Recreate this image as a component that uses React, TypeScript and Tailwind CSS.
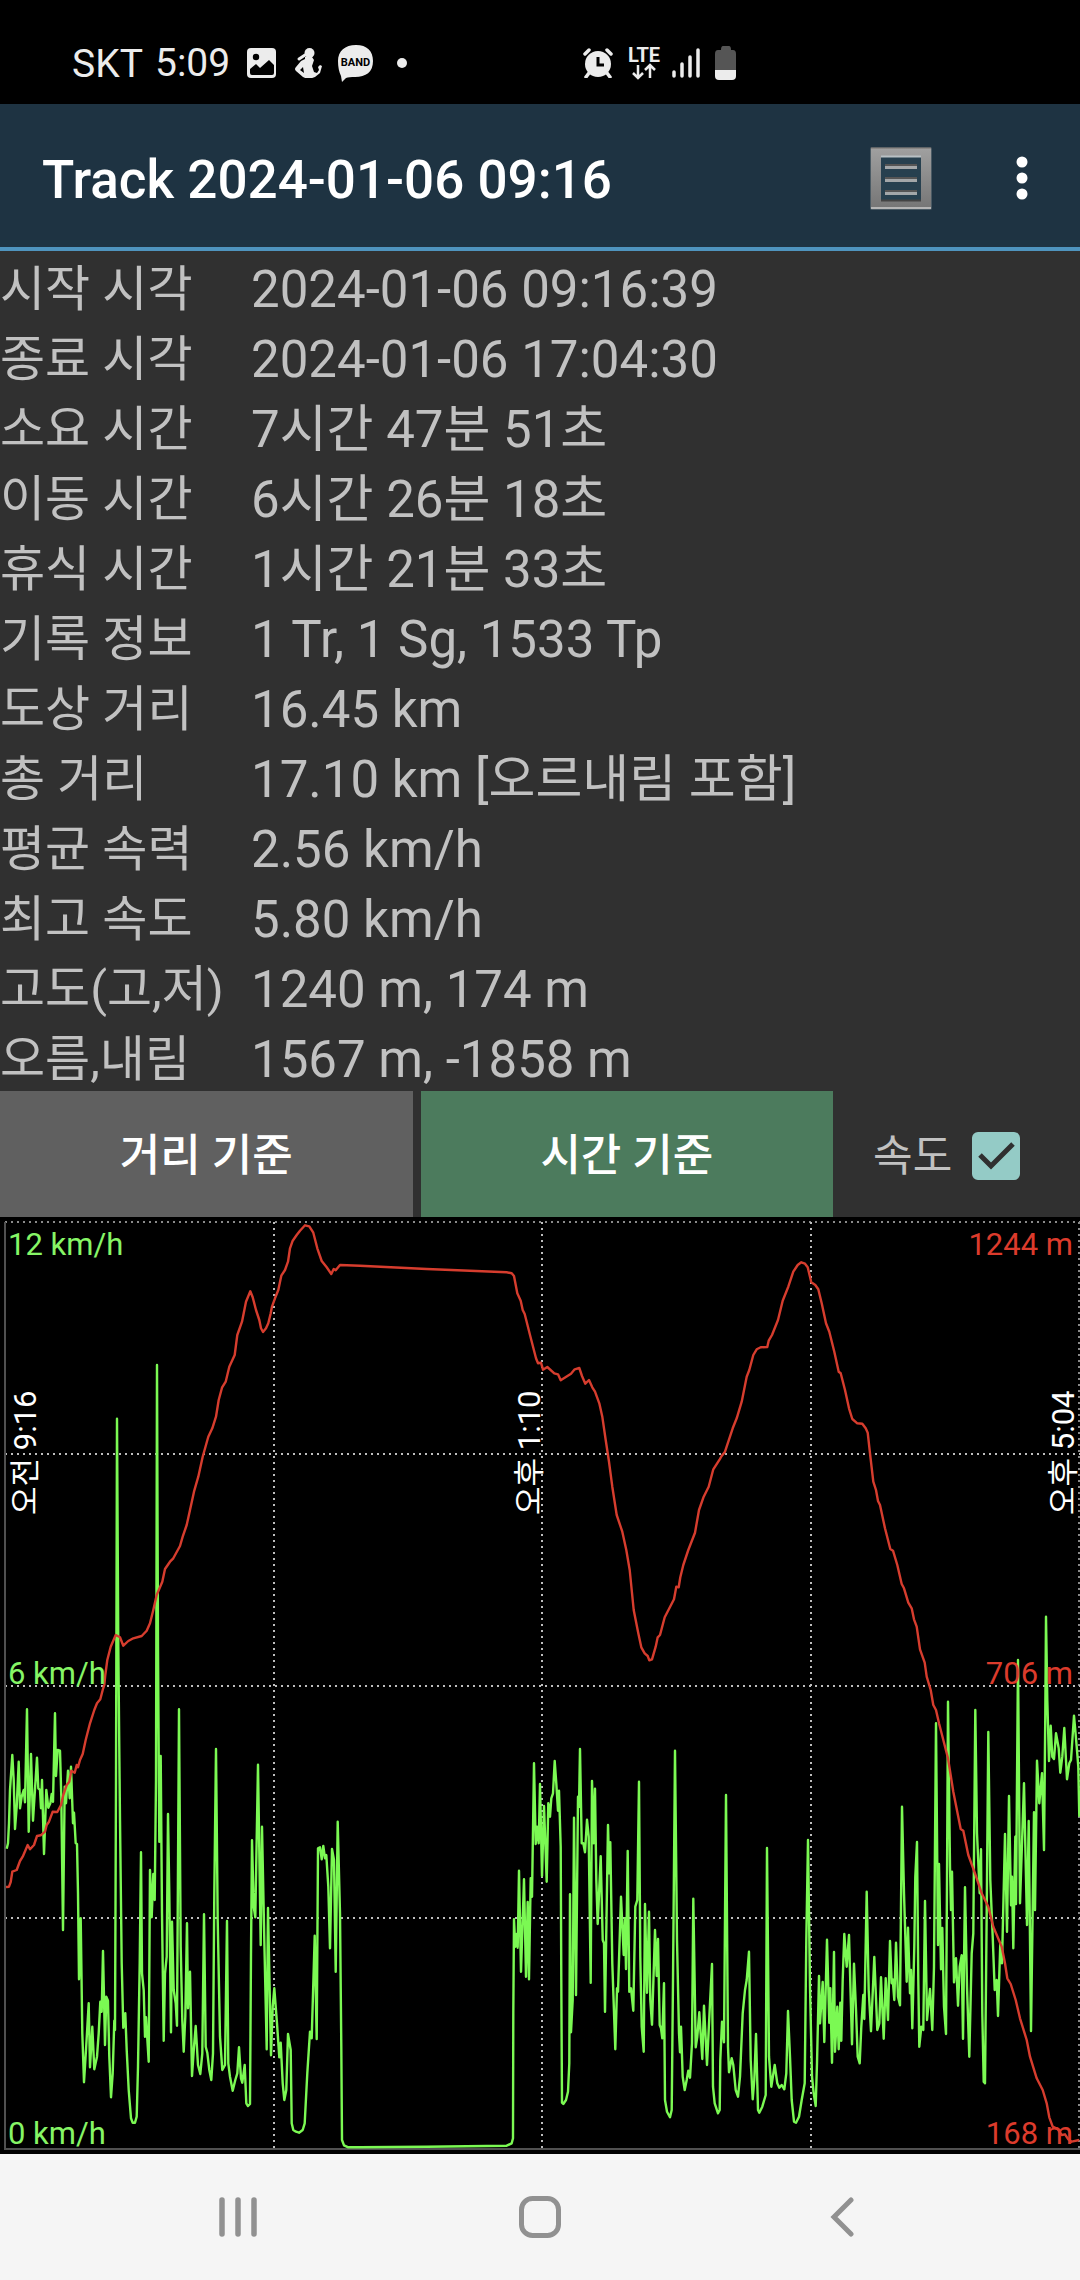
import React, { useState } from "react";

const stats = [
  { label: "시작 시각", value: "2024-01-06 09:16:39" },
  { label: "종료 시각", value: "2024-01-06 17:04:30" },
  { label: "소요 시간", value: "7시간 47분 51초" },
  { label: "이동 시간", value: "6시간 26분 18초" },
  { label: "휴식 시간", value: "1시간 21분 33초" },
  { label: "기록 정보", value: "1 Tr, 1 Sg, 1533 Tp" },
  { label: "도상 거리", value: "16.45 km" },
  { label: "총 거리", value: "17.10 km [오르내림 포함]" },
  { label: "평균 속력", value: "2.56 km/h" },
  { label: "최고 속도", value: "5.80 km/h" },
  { label: "고도(고,저)", value: "1240 m, 174 m" },
  { label: "오름,내림", value: "1567 m, -1858 m" },
];

// Samples are stored in thirds of a chart unit, one string per third of the time axis
const speedSamples = [
  "20,506 24,490 27,430 30,330 37,225 41,300 45,447 50,380 56,245 60,385 65,350 71,330 75,367 81,88 86,455 93,222 99,422 111,233 115,325 120,330 123,385 126,300 132,522 139,330 145,383 151,370 155,342 159,365 165,100 168,288 173,210 180,212 184,350 189,750 194,320 198,370 204,272 209,355 213,260 219,430 222,398 227,490 231,492 234,640 237,898 242,715 247,1060 252,1207 258,1110 266,970 270,1162 277,1040 283,1168 291,1130 296,1060 301,965 305,995 309,813 315,1095 319,950 324,962 328,1130 333,1252 338,1180 343,1022 345,1050 348,300 351,-784 355,-100 360,420 365,850 370,1043 376,1000 380,1110 386,1230 393,1315 398,1328 405,1328 410,1310 414,1160 419,850 423,517 426,880 431,930 435,1070 438,1012 446,1145 450,570 455,712 460,582 464,660 468,300 471,-945 474,-100 478,485 482,228 486,700 491,1082 495,880 500,830 504,402 508,640 513,1057 516,725 521,930 527,970 531,1037 537,88 542,800 547,1020 551,1115 556,1010 561,730 564,985 570,875 576,1188 582,1100 587,1038 594,1155 601,1182 607,1120 612,703 617,1100 622,1118 628,1170 634,1200 639,1120 643,640 648,207 653,720 660,1070 667,1170 675,1155 681,723 685,1150 690,1190 698,1232 706,1200 712,1180 717,1102 723,1195 727,1208 734,1155 739,1270 744,1278 750,1272 753,820 756,481 761,680 766,712 774,254 782,795 786,440 793,780 800,1108 804,684 813,1126 818,980 823,925 831,1030 838,1132 842,1088 848,1210 853,1260 859,1230 864,1062 872,1110 875,1330 880,1350 888,1355 897,1358 908,1350 914,1330 922,1180 930,1055 935,1075 944,767 950,1077 954,505 960,502 965,538 970,498 975,535 979,525 985,620 990,805 996,507 1002,540 1007,875 1013,425 1020,700 1024,1100 1026,1380 1032,1396 1045,1402",
  "0,1402 200,1400 440,1397 455,1390 459,1375 460,1000 462,718 466,800 470,762 473,803 477,572 483,875 492,598 498,890 503,666 507,898 512,595 516,650 522,250 527,492 531,440 536,490 540,312 546,588 552,378 560,605 565,370 570,410 574,355 579,340 584,243 589,310 594,392 597,332 602,500 604,900 606,1268 610,1272 618,1260 624,1235 628,1150 630,643 633,1057 638,960 642,413 648,945 654,350 657,380 660,207 665,490 670,490 675,517 681,419 686,470 692,908 696,303 701,490 705,326 709,600 713,732 722,529 728,780 732,790 735,995 744,435 748,580 751,487 757,850 766,1108 771,925 774,935 783,650 791,825 795,715 798,867 803,513 808,935 813,925 820,992 826,680 832,660 837,305 841,830 845,1040 851,1115 855,672 861,938 867,695 871,960 876,1034 885,750 890,888 894,777 899,1035 903,1045 907,1075 912,910 915,1260 921,1295 930,1312 935,1290 939,900 945,212 951,780 957,1060 960,1117 963,1040 968,1190 974,1230 980,1200 985,1172 990,1193 996,1090 1000,656 1007,1102 1012,1070 1018,997 1027,1137 1032,977 1041,1155 1050,970 1056,852 1059,1220 1064,1270 1074,1300 1079,1290",
  "1,1140 6,1025 12,1087 18,345 24,1100 27,1177 35,1135 40,1155 47,1230 54,1250 60,1190 68,1000 75,930 80,900 87,815 92,1140 98,1258 103,1200 108,1062 114,1290 118,1298 127,1280 137,1245 141,504 147,1130 154,1220 164,1155 172,1210 178,1223 185,1215 193,1228 199,1180 204,993 210,1130 215,1260 222,1325 228,1328 237,1310 245,1260 254,1210 259,780 264,480 270,920 276,1190 281,1240 287,1278 291,1150 297,888 300,1030 308,906 313,1086 321,779 328,1028 331,925 336,1148 342,816 345,1115 352,980 356,1108 361,968 364,1082 368,900 373,762 380,860 387,765 396,1093 402,851 408,990 413,1130 419,1150 424,1040 430,945 433,1017 440,635 446,930 453,1054 463,831 472,1050 478,1030 483,892 491,1076 497,895 504,1020 510,783 515,910 518,898 523,960 528,788 534,950 540,976 546,380 552,640 560,905 564,743 570,940 573,870 577,1045 583,800 586,590 591,486 595,900 598,1100 604,1040 610,1050 615,663 621,1020 630,927 637,1050 642,860 648,130 654,795 657,552 663,868 667,744 672,980 678,1062 681,600 684,65 690,560 693,690 696,575 702,907 708,835 714,977 719,860 725,826 729,1076 735,622 741,920 748,1130 755,820 760,760 766,90 771,460 779,640 783,508 787,1000 791,1205 795,1210 800,700 805,156 811,600 818,770 824,930 830,900 834,1008 841,790 846,850 855,462 861,755 867,348 873,676 876,590 880,805 886,470 888,672 894,-60 900,670 912,310 921,735 926,423 933,1053 942,397 945,690 951,242 958,370 966,280 972,510 976,100 978,-190 982,60 987,243 992,137 997,230 1002,237 1008,160 1016,205 1021,278 1027,230 1033,144 1041,298 1048,250 1053,240 1062,107 1070,200 1075,260 1078,410",
];

const altitudeSamples = [
  "18,2031 27,2030 32,2016 37,1985 50,1980 60,1953 68,1940 83,1905 90,1918 102,1905 111,1878 122,1876 135,1865 140,1845 147,1835 158,1805 172,1806 183,1785 190,1755 200,1725 208,1715 214,1682 224,1688 230,1665 234,1672 240,1650 248,1632 257,1590 270,1540 283,1500 291,1480 301,1468 308,1440 313,1425 316,1395 322,1350 332,1310 347,1275 360,1282 370,1307 385,1293 400,1285 425,1278 440,1262 450,1240 460,1200 470,1155 487,1115 495,1077 510,1055 520,1045 540,1008 548,980 560,945 570,900 582,845 595,800 608,740 625,680 637,655 648,620 656,570 666,533 677,515 688,470 704,435 712,375 726,335 738,275 751,244 758,262 768,300 778,330 783,355 789,366 798,355 805,340 812,310 816,290 825,265 835,240 844,197 855,180 864,155 870,115 878,92 890,75 900,62 915,46 928,49 940,68 952,115 965,153 980,172 994,192 1001,177 1007,181 1020,165",
  "0,167 200,177 440,187 455,190 462,198 472,250 482,272 488,300 494,312 510,375 528,445 534,460 543,458 549,479 562,471 583,490 594,493 602,511 633,491 644,478 658,474 666,498 676,521 687,510 697,532 705,545 718,580 727,620 737,690 747,755 757,830 770,915 787,965 799,1020 809,1080 821,1200 835,1270 844,1312 854,1330 863,1338 868,1351 876,1348 887,1310 893,1282 900,1275 914,1222 942,1168 949,1130 956,1132 961,1102 970,1065 985,1020 1005,968 1017,900 1031,860 1046,830 1060,778 1079,748",
  "5,738 15,725 38,655 50,625 65,575 80,500 88,480 100,435 110,418 122,412 142,411 146,392 156,375 174,330 188,272 205,230 220,185 233,165 244,157 255,161 263,172 274,217 286,225 295,238 305,280 318,340 328,365 343,425 356,485 362,490 375,540 387,595 397,627 412,640 427,641 437,655 443,668 450,730 460,815 468,840 474,873 480,885 495,955 511,1017 519,1022 532,1065 545,1122 552,1135 565,1178 575,1195 582,1228 590,1250 600,1318 614,1358 620,1400 632,1440 640,1485 648,1500 657,1540 684,1645 700,1745 722,1857 730,1862 745,1935 765,1990 785,2050 805,2090 820,2150 845,2210 855,2260 862,2305 872,2322 887,2370 900,2425 920,2490 930,2540 950,2605 968,2640 980,2680 988,2722 998,2750 1015,2758 1025,2775 1035,2773 1045,2788 1055,2795 1078,2790",
];

const toPoints = (parts: string[], offsetY: number) =>
  parts
    .flatMap((part, i) =>
      part.split(" ").map((pair) => {
        const [x, y] = pair.split(",").map(Number);
        return `${((x + i * 1080) / 3).toFixed(1)},${((y + offsetY) / 3).toFixed(1)}`;
      })
    )
    .join(" ");

const speedPoints = toPoints(speedSamples, 1389);
const altitudePoints = toPoints(altitudeSamples, -21);

const StatusBar = () => {
  return (
    <div className="flex h-[104px] items-center bg-black pt-[22px] pl-[72px] text-[#ececec]">
      <span className="w-[83px] pt-[2px] text-[39px] leading-[44px]">SKT</span>
      <span className="w-[92px] text-[39px] leading-[44px]">5:09</span>
      <svg className="h-[30px] w-[30px]" viewBox="0 0 30 30" aria-hidden="true">
        <rect width="29" height="30" rx="4" fill="#ececec" />
        <circle cx="9" cy="9" r="3.2" fill="#000" />
        <path d="M3 21l6-5 4 4 9-8 5 5v8q0 2-2 2H5q-2 0-2-2z" fill="#000" />
      </svg>
      <svg className="ml-[18px] h-[30px] w-[28px]" viewBox="0 0 28 30" aria-hidden="true">
        <circle cx="14.500" cy="5" r="5" fill="#ececec" />
        <path
          d="M10 9q4-1 7 0l2 3-2 6 2 6 3 1 2-3-1-3 2-2 2 1-2 7-5 4q-7 3-12 0l-7-6q-2-2 0-4l5-6 4-2zM8 19l-3 3 4 3z"
          fill="#ececec"
          fillRule="evenodd"
        />
        <path d="M4 11l6-4" stroke="#ececec" strokeWidth="3" strokeLinecap="round" />
      </svg>
      <svg className="ml-[14px] h-[38px] w-[38px]" viewBox="0 0 38 38" aria-hidden="true">
        <path
          d="M19 1c11 0 17 6 17 16 0 11-7 16-18 16-4 0-7 0-9 1l-4 4-1-6C2 28 1 23 1 17 1 7 8 1 19 1z"
          fill="#ececec"
        />
        <text x="18.500" y="22" fontSize="11" fontWeight="700" textAnchor="middle" fill="#000">
          BAND
        </text>
      </svg>
      <span className="ml-[22px] h-[10px] w-[10px] rounded-full bg-[#ececec]" />

      <svg className="ml-[176px] h-[30px] w-[30px]" viewBox="0 0 30 30" aria-hidden="true">
        <circle cx="15" cy="16" r="13" fill="#ececec" />
        <path
          d="M2 6l4-4M28 6l-4-4M6 25l-3 4M24 25l3 4"
          stroke="#ececec"
          strokeWidth="3.500"
          strokeLinecap="round"
        />
        <path d="M15 9v8h6" stroke="#000" strokeWidth="3" fill="none" />
      </svg>
      <svg className="ml-[15px] h-[42px] w-[34px]" viewBox="0 0 34 42" aria-hidden="true">
        <text x="16" y="20" fontSize="20" fontWeight="700" textAnchor="middle" fill="#ececec">
          LTE
        </text>
        <path
          d="M10 23v12M5 31l5 5 5-5M22 36V24M17 28l5-5 5 5"
          stroke="#ececec"
          strokeWidth="2.500"
          fill="none"
        />
      </svg>
      <svg className="ml-[10px] h-[30px] w-[28px]" viewBox="0 0 28 30" aria-hidden="true">
        <path
          d="M2 24v4M10 16v12M18 9v19M26 2v26"
          stroke="#ececec"
          strokeWidth="3.500"
          strokeLinecap="round"
        />
      </svg>
      <svg className="ml-[15px] h-[34px] w-[22px]" viewBox="0 0 22 34" aria-hidden="true">
        <path d="M8 0h6q2 0 2 4h2q3 0 3 4v16H0V8q0-4 3-4h3q0-4 2-4z" fill="#555" />
        <path d="M0 24h21v6q0 4-4 4H4q-4 0-4-4z" fill="#ececec" />
      </svg>
    </div>
  );
};

const AppBar = () => {
  return (
    <header className="flex h-[147px] items-center border-b-4 border-[#4f94be] bg-[#1e3342] pt-1 pl-[42px] text-white">
      <h1 className="grow pt-1 text-[53px] leading-[64px] font-medium">Track 2024-01-06 09:16</h1>
      <button type="button" aria-label="목록" className="mr-[83px]">
        <svg className="h-[64px] w-[64px]" viewBox="0 0 64 64">
          <defs>
            <linearGradient id="frame" x1="0" y1="0" x2="0" y2="1">
              <stop offset="0" stopColor="#a0a0a0" />
              <stop offset="1" stopColor="#757575" />
            </linearGradient>
          </defs>
          <rect x="1" y="1" width="62" height="63" rx="2" fill="#4a5a64" />
          <rect x="2" y="2" width="60" height="61" fill="url(#frame)" />
          <path d="M2 62h60" stroke="#b5b5b5" strokeWidth="2" />
          <path d="M2 2h60" stroke="#77706c" strokeWidth="1" />
          <rect x="12" y="10" width="40" height="44" fill="#27404f" />
          <path d="M12 10.500h40" stroke="#b8c0c4" strokeWidth="2" />
          <path d="M12 54.500h40" stroke="#444" strokeWidth="2" />
          <path d="M16 19h32M16 32h32M16 45h32" stroke="#555" strokeWidth="2" />
          <path d="M16 21.500h32M16 34.500h32M16 47.500h32" stroke="#a3a7a9" strokeWidth="3" />
        </svg>
      </button>
      <button type="button" aria-label="메뉴" className="mr-[52px]">
        <svg className="h-[44px] w-[12px]" viewBox="0 0 12 44" fill="#fff">
          <circle cx="6" cy="6" r="5.500" />
          <circle cx="6" cy="22" r="5.500" />
          <circle cx="6" cy="38" r="5.500" />
        </svg>
      </button>
    </header>
  );
};

const TrackChart = ({ showSpeed }: { showSpeed: boolean }) => {
  return (
    <svg className="block h-auto w-full bg-black" viewBox="0 0 1080 937" role="img" aria-label="고도 및 속도">
      <g strokeWidth="2" strokeDasharray="2 4" fill="none">
        <path d="M5 5H1080M1079 5V932" stroke="#8a8a8a" />
        <path d="M5 237H1080M5 469H1080M5 701H1080" stroke="#bdbdbd" />
        <path d="M274 5V932M542 5V932M811 5V932" stroke="#bdbdbd" />
      </g>
      <path d="M5 5V932H1080" stroke="#505050" strokeWidth="2" fill="none" />

      {showSpeed && (
        <polyline points={speedPoints} fill="none" stroke="#7bf953" strokeWidth="2.4" strokeLinejoin="round" />
      )}
      <polyline points={altitudePoints} fill="none" stroke="#d63d2e" strokeWidth="2.4" strokeLinejoin="round" />

      <g fontSize="31" fill="#86f566">
        <text x="8" y="38">12 km/h</text>
        <text x="8" y="467">6 km/h</text>
        <text x="8" y="927">0 km/h</text>
      </g>
      <g fontSize="31" fill="#dc3b2c" textAnchor="end">
        <text x="1073" y="38">1244 m</text>
        <text x="1073" y="467">706 m</text>
        <text x="1073" y="927">168 m</text>
      </g>
      <g fontSize="31" fill="#fff">
        <text transform="translate(36 298) rotate(-90)">오전 9:16</text>
        <text transform="translate(540 298) rotate(-90)">오후 1:10</text>
        <text transform="translate(1074 298) rotate(-90)">오후 5:04</text>
      </g>
    </svg>
  );
};

const NavBar = () => {
  return (
    <nav className="grid h-[126px] grid-cols-3 place-items-center bg-[#f5f5f5] px-[87px] text-[#919191]">
      <button type="button" aria-label="최근 앱">
        <svg className="h-[42px] w-[42px]" viewBox="0 0 42 42" stroke="currentColor" strokeWidth="5.500" strokeLinecap="round">
          <path d="M5 4v34M21 4v34M37 4v34" />
        </svg>
      </button>
      <button type="button" aria-label="홈">
        <svg className="h-[42px] w-[42px]" viewBox="0 0 42 42" fill="none" stroke="currentColor" strokeWidth="5">
          <rect x="2.500" y="2.500" width="37" height="37" rx="11" />
        </svg>
      </button>
      <button type="button" aria-label="뒤로">
        <svg
          className="h-[42px] w-[24px]"
          viewBox="0 0 24 42"
          fill="none"
          stroke="currentColor"
          strokeWidth="5"
          strokeLinecap="round"
        >
          <path d="M21 4L4 21l17 17" />
        </svg>
      </button>
    </nav>
  );
};

const App = () => {
  const [mode, setMode] = useState("time");
  const [showSpeed, setShowSpeed] = useState(true);

  return (
    <div className="min-h-screen bg-[#303030] font-[Roboto,'Noto_Sans_CJK_KR',sans-serif]">
      <StatusBar />
      <AppBar />

      <table className="w-full table-fixed text-left text-[#c1c1c1]">
        <tbody>
          {stats.map((item) => (
            <tr key={item.label} className="h-[70px]">
              <th scope="row" className="w-[251px] p-0 pt-2 align-top text-[49px] leading-[62px] font-normal whitespace-nowrap">
                {item.label}
              </th>
              <td className="p-0 pt-2 align-top text-[51px] leading-[62px] whitespace-nowrap">{item.value}</td>
            </tr>
          ))}
        </tbody>
      </table>

      <div className="flex h-[126px] gap-2 text-white">
        <button
          type="button"
          onClick={() => setMode("distance")}
          className={`w-[38.2%] pt-1 text-[44px] font-medium ${mode === "distance" ? "bg-[#4c7b5d]" : "bg-[#606060]"}`}
        >
          거리 기준
        </button>
        <button
          type="button"
          onClick={() => setMode("time")}
          className={`w-[38.2%] pt-1 text-[44px] font-medium ${mode === "time" ? "bg-[#4c7b5d]" : "bg-[#606060]"}`}
        >
          시간 기준
        </button>
        <label className="flex grow items-center pt-1 pl-8 text-[43px] text-[#c1c1c1]">
          속도
          <span className="relative ml-5 h-12 w-12">
            <input
              type="checkbox"
              checked={showSpeed}
              onChange={(e) => setShowSpeed(e.target.checked)}
              className="block h-12 w-12 appearance-none rounded-md border-4 border-[#94cbc6] checked:bg-[#94cbc6]"
            />
            {showSpeed && (
              <svg className="pointer-events-none absolute inset-0 h-12 w-12" viewBox="0 0 48 48" aria-hidden="true">
                <path d="M8 23l11 11 22-22" fill="none" stroke="#303030" strokeWidth="5" />
              </svg>
            )}
          </span>
        </label>
      </div>

      <TrackChart showSpeed={showSpeed} />
      <NavBar />
    </div>
  );
};

export default App;
